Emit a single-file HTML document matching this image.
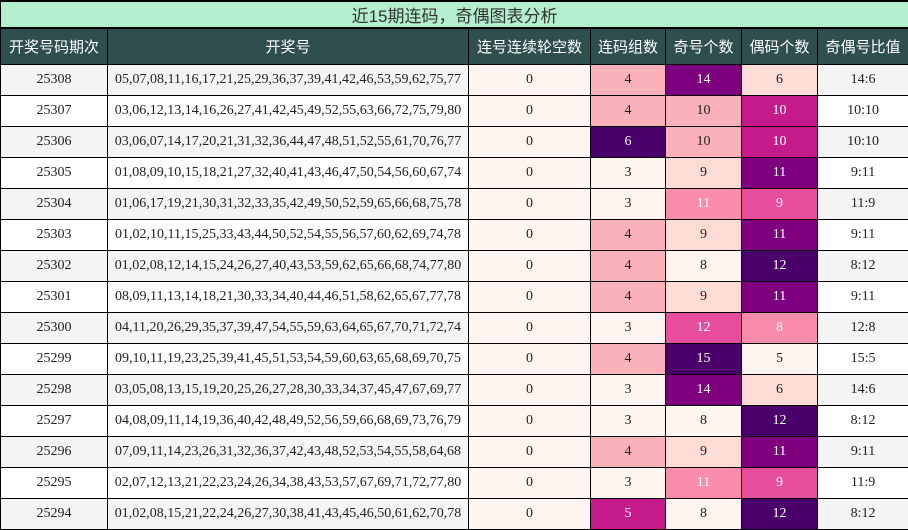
<!DOCTYPE html>
<html><head><meta charset="utf-8"><style>
html,body{margin:0;padding:0;background:#fff;}
table{border-collapse:collapse;table-layout:fixed;width:908px;font-family:"Liberation Serif","Noto Serif CJK SC",serif;}
td,th{border:1px solid #000;text-align:center;padding:0;overflow:hidden;white-space:nowrap;}
.title td{height:25px;background:#b3eecf;color:#333;font-size:17px;font-family:"Liberation Sans","Noto Sans CJK SC",sans-serif;border-width:2px 1px 2px 1px;}
th{height:35px;background:#2f4f4f;color:#fff;font-weight:normal;font-size:15px;font-family:"Liberation Sans","Noto Sans CJK SC",sans-serif;}
tbody td{height:30px;font-size:14px;color:#222;}
tr.a td.b{background:#f4f4f4}
tr.c td.b{background:#fff}
.z{background:#fff5f0}
.L0{background:#fff5f0}.L1{background:#fddcd6}.L2{background:#fbb1b9}
.L3{background:#f98cab;color:#fff!important}.L4{background:#e64d9b;color:#fff!important}
.L5{background:#c51b8a;color:#fff!important}.L6{background:#7f007f;color:#fff!important}
.L7{background:#49006a;color:#fff!important}
</style></head><body>
<table>
<colgroup><col style="width:107px"><col style="width:361px"><col style="width:122px"><col style="width:75px"><col style="width:76px"><col style="width:76px"><col style="width:91px"></colgroup>
<tr class="title"><td colspan="7">近15期连码，奇偶图表分析</td></tr>
<tr><th>开奖号码期次</th><th>开奖号</th><th>连号连续轮空数</th><th>连码组数</th><th>奇号个数</th><th>偶码个数</th><th>奇偶号比值</th></tr>
<tbody>
<tr class="a"><td class="b">25308</td><td class="b">05,07,08,11,16,17,21,25,29,36,37,39,41,42,46,53,59,62,75,77</td><td class="z">0</td><td class="L2">4</td><td class="L6">14</td><td class="L1">6</td><td class="b">14:6</td></tr>
<tr class="c"><td class="b">25307</td><td class="b">03,06,12,13,14,16,26,27,41,42,45,49,52,55,63,66,72,75,79,80</td><td class="z">0</td><td class="L2">4</td><td class="L2">10</td><td class="L5">10</td><td class="b">10:10</td></tr>
<tr class="a"><td class="b">25306</td><td class="b">03,06,07,14,17,20,21,31,32,36,44,47,48,51,52,55,61,70,76,77</td><td class="z">0</td><td class="L7">6</td><td class="L2">10</td><td class="L5">10</td><td class="b">10:10</td></tr>
<tr class="c"><td class="b">25305</td><td class="b">01,08,09,10,15,18,21,27,32,40,41,43,46,47,50,54,56,60,67,74</td><td class="z">0</td><td class="L0">3</td><td class="L1">9</td><td class="L6">11</td><td class="b">9:11</td></tr>
<tr class="a"><td class="b">25304</td><td class="b">01,06,17,19,21,30,31,32,33,35,42,49,50,52,59,65,66,68,75,78</td><td class="z">0</td><td class="L0">3</td><td class="L3">11</td><td class="L4">9</td><td class="b">11:9</td></tr>
<tr class="c"><td class="b">25303</td><td class="b">01,02,10,11,15,25,33,43,44,50,52,54,55,56,57,60,62,69,74,78</td><td class="z">0</td><td class="L2">4</td><td class="L1">9</td><td class="L6">11</td><td class="b">9:11</td></tr>
<tr class="a"><td class="b">25302</td><td class="b">01,02,08,12,14,15,24,26,27,40,43,53,59,62,65,66,68,74,77,80</td><td class="z">0</td><td class="L2">4</td><td class="L0">8</td><td class="L7">12</td><td class="b">8:12</td></tr>
<tr class="c"><td class="b">25301</td><td class="b">08,09,11,13,14,18,21,30,33,34,40,44,46,51,58,62,65,67,77,78</td><td class="z">0</td><td class="L2">4</td><td class="L1">9</td><td class="L6">11</td><td class="b">9:11</td></tr>
<tr class="a"><td class="b">25300</td><td class="b">04,11,20,26,29,35,37,39,47,54,55,59,63,64,65,67,70,71,72,74</td><td class="z">0</td><td class="L0">3</td><td class="L4">12</td><td class="L3">8</td><td class="b">12:8</td></tr>
<tr class="c"><td class="b">25299</td><td class="b">09,10,11,19,23,25,39,41,45,51,53,54,59,60,63,65,68,69,70,75</td><td class="z">0</td><td class="L2">4</td><td class="L7">15</td><td class="L0">5</td><td class="b">15:5</td></tr>
<tr class="a"><td class="b">25298</td><td class="b">03,05,08,13,15,19,20,25,26,27,28,30,33,34,37,45,47,67,69,77</td><td class="z">0</td><td class="L0">3</td><td class="L6">14</td><td class="L1">6</td><td class="b">14:6</td></tr>
<tr class="c"><td class="b">25297</td><td class="b">04,08,09,11,14,19,36,40,42,48,49,52,56,59,66,68,69,73,76,79</td><td class="z">0</td><td class="L0">3</td><td class="L0">8</td><td class="L7">12</td><td class="b">8:12</td></tr>
<tr class="a"><td class="b">25296</td><td class="b">07,09,11,14,23,26,31,32,36,37,42,43,48,52,53,54,55,58,64,68</td><td class="z">0</td><td class="L2">4</td><td class="L1">9</td><td class="L6">11</td><td class="b">9:11</td></tr>
<tr class="c"><td class="b">25295</td><td class="b">02,07,12,13,21,22,23,24,26,34,38,43,53,57,67,69,71,72,77,80</td><td class="z">0</td><td class="L0">3</td><td class="L3">11</td><td class="L4">9</td><td class="b">11:9</td></tr>
<tr class="a"><td class="b">25294</td><td class="b">01,02,08,15,21,22,24,26,27,30,38,41,43,45,46,50,61,62,70,78</td><td class="z">0</td><td class="L5">5</td><td class="L0">8</td><td class="L7">12</td><td class="b">8:12</td></tr>
</tbody></table>
</body></html>
